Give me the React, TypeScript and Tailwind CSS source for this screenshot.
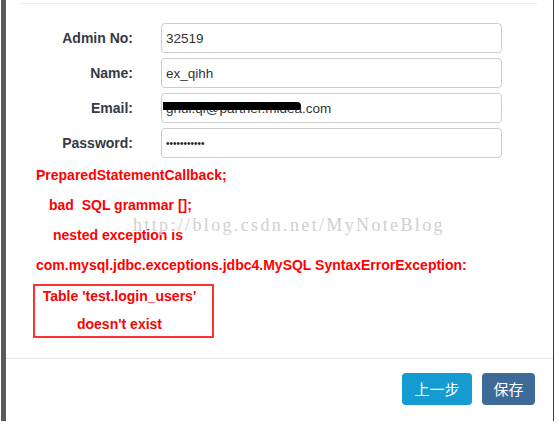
import React from 'react';

type Field = { label: string; value: string; kind?: 'email' | 'password' };

const fields: Field[] = [
  { label: 'Admin No:', value: '32519' },
  { label: 'Name:', value: 'ex_qihh' },
  { label: 'Email:', value: 'ghui.qi@partner.midea.com', kind: 'email' },
  { label: 'Password:', value: '•••••••••••', kind: 'password' },
];

function FormRow({ field }: { field: Field }) {
  return (
    <div className="flex items-center h-[30px]">
      <label className="w-[127px] text-right text-[14px] font-bold text-[#343a42]">{field.label}</label>
      <div className="relative ml-[28px] w-[341px] h-[30px]">
        <input
          readOnly
          value={field.value}
          className={
            field.kind === 'password'
              ? 'w-full h-full px-[4px] border border-[#cccccc] rounded-[4px] bg-white text-[10px] text-[#222] outline-none'
              : 'w-full h-full px-[4px] border border-[#cccccc] rounded-[4px] bg-white text-[13.5px] text-[#333] outline-none'
          }
        />
        {field.kind === 'email' ? (
          <div className="absolute left-[2px] top-[9px] w-[138px] h-[8px] rounded-l-[4px] rounded-r-full bg-black" />
        ) : null}
      </div>
    </div>
  );
}

export default function App() {
  return (
    <div className="relative w-[559px] h-[428px] bg-white font-['Liberation_Sans',Arial,sans-serif] overflow-hidden">
      <div className="ml-[1px] w-[553px] h-[421px] border-l-[5px] border-l-[#5a5a5a] border-r border-r-[#3a3a3a] flex flex-col">
        <div className="mt-[3px] ml-[14px] w-[517px] h-px bg-[#ececec]" />

        <div className="mt-[19px] flex flex-col gap-[5px]">
          {fields.map((f) => (
            <FormRow key={f.label} field={f} />
          ))}
        </div>

        <div className="mt-[2px] text-[14px] font-bold text-[#ff0000] leading-[30px]">
          <div className="pl-[30px]">PreparedStatementCallback;</div>
          <div className="pl-[43px]">bad&nbsp; SQL grammar [];</div>
          <div className="pl-[47px]">nested exception is</div>
          <div className="pl-[30px]">com.mysql.jdbc.exceptions.jdbc4.MySQL SyntaxErrorException:</div>
        </div>

        <div className="mt-[4px] ml-[27px] w-[181px] h-[54px] border-2 border-[#ff3030] text-center pr-[8px] text-[14px] font-bold text-[#ff0000] leading-[20px]">
          <div>Table 'test.login_users'</div>
          <div className="mt-[8px]">doesn't exist</div>
        </div>

        <div className="mt-auto border-t border-[#e5e5e5] pt-[14px] pb-[16px] pr-[18px] flex justify-end gap-[10px]">
          <button
            type="button"
            className="w-[70px] h-[32px] rounded-[4px] bg-[#139bd2] text-white text-[15px] font-['Noto_Sans_CJK_SC',sans-serif]"
          >
            上一步
          </button>
          <button
            type="button"
            className="w-[53px] h-[32px] rounded-[4px] bg-[#3e6a97] text-white text-[15px] font-['Noto_Sans_CJK_SC',sans-serif]"
          >
            保存
          </button>
        </div>
      </div>

      <div className="absolute left-[133px] top-[213px] text-[18px] leading-[24px] tracking-[2.35px] text-[#cfcfcf] font-['Liberation_Serif',serif] pointer-events-none">
        http://blog.csdn.net/MyNoteBlog
      </div>
    </div>
  );
}
